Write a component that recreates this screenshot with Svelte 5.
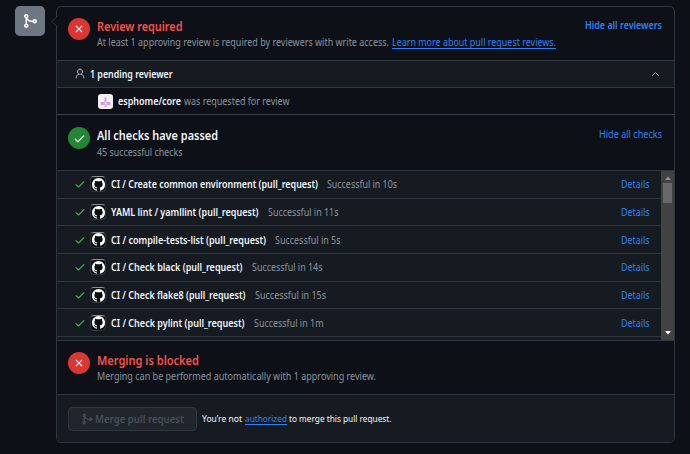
<script>
  const checks = [
    { name: 'CI / Create common environment (pull_request)', time: '10s', w: 207, tw: 70 },
    { name: 'YAML lint / yamllint (pull_request)', time: '11s', w: 147.5, tw: 70.5 },
    { name: 'CI / compile-tests-list (pull_request)', time: '5s', w: 155, tw: 65.5 },
    { name: 'CI / Check black (pull_request)', time: '14s', w: 131.5, tw: 70.5 },
    { name: 'CI / Check flake8 (pull_request)', time: '15s', w: 134.5, tw: 71 },
    { name: 'CI / Check pylint (pull_request)', time: '1m', w: 133.5, tw: 69.5 }
  ];

  // Condenses a label so that its text spans the given width.
  function fit(node, width) {
    const natural = node.getBoundingClientRect().width;
    node.style.transformOrigin = '0 50%';
    node.style.transform = `scaleX(${width / natural})`;
    node.style.marginRight = `${width - natural}px`;
  }
</script>

{#snippet merge(size)}
  <svg width={size} height={size} viewBox="0 0 16 16" fill="currentColor"><path d="M5.45 5.154A4.25 4.25 0 0 0 9.25 7.5h1.378a2.251 2.251 0 1 1 0 1.5H9.25A5.734 5.734 0 0 1 5 7.123v3.505a2.25 2.25 0 1 1-1.5 0V5.372a2.25 2.25 0 1 1 1.95-.218ZM4.25 13.5a.75.75 0 1 0 0-1.5.75.75 0 0 0 0 1.5Zm8.5-4.5a.75.75 0 1 0 0-1.5.75.75 0 0 0 0 1.5ZM5 3.25a.75.75 0 1 0-1.5 0 .75.75 0 0 0 1.5 0Z" /></svg>
{/snippet}
{#snippet cross()}
  <span class="status red"><svg width="12" height="12" viewBox="0 0 16 16" fill="currentColor"><path d="M3.72 3.72a.75.75 0 0 1 1.06 0L8 6.94l3.22-3.22a.749.749 0 0 1 1.275.326.749.749 0 0 1-.215.734L9.06 8l3.22 3.22a.749.749 0 0 1-.326 1.275.749.749 0 0 1-.734-.215L8 9.06l-3.22 3.22a.751.751 0 0 1-1.042-.018.751.751 0 0 1-.018-1.042L6.94 8 3.72 4.78a.75.75 0 0 1 0-1.06Z" /></svg></span>
{/snippet}
{#snippet tick(size)}
  <svg width={size} height={size} viewBox="0 0 16 16" fill="currentColor"><path d="M13.78 4.22a.75.75 0 0 1 0 1.06l-7.25 7.25a.75.75 0 0 1-1.06 0L2.22 9.28a.751.751 0 0 1 .018-1.042.751.751 0 0 1 1.042-.018L6 10.94l6.72-6.72a.75.75 0 0 1 1.06 0Z" /></svg>
{/snippet}

<main>
  <div class="badge">{@render merge(16)}</div>
  <div class="box">
    <svg class="pointer" width="7" height="13" viewBox="0 0 7 13"><path d="M7 .5 1 6.5l6 6" fill="#0d1117" stroke="#30363d" /></svg>

    <section class="head review">
      {@render cross()}
      <div class="copy">
        <h3 class="danger"><span use:fit={85.5}>Review required</span></h3>
        <p><span use:fit={292}>At least 1 approving review is required by reviewers with write access.</span><a class="under" href="#reviews" use:fit={164}>Learn more about pull request reviews.</a></p>
      </div>
      <a class="toggle strong" href="#reviewers" use:fit={77}>Hide all reviewers</a>
    </section>

    <div class="pending">
      <svg width="12" height="12" viewBox="0 0 16 16" fill="#8b949e"><path d="M10.561 8.073a6.005 6.005 0 0 1 3.432 5.142.75.75 0 1 1-1.498.07 4.5 4.5 0 0 0-8.99 0 .75.75 0 0 1-1.498-.07 6.004 6.004 0 0 1 3.431-5.142 3.999 3.999 0 1 1 5.123 0ZM10.5 5a2.5 2.5 0 1 0-5 0 2.5 2.5 0 0 0 5 0Z" /></svg>
      <b use:fit={82.5}>1 pending reviewer</b>
      <svg class="chev" width="9" height="6" viewBox="0 0 9 6" fill="none" stroke="#8b949e"><path d="M1 5 4.5 1.5 8 5" /></svg>
    </div>

    <div class="reviewer">
      <svg width="15" height="15" viewBox="0 0 15 15"><rect width="15" height="15" rx="3" fill="#f0f0f0" /><path d="M6.500 3.500h2V8h4v3h-4v2h-2v-2h-4V8h4z" fill="#d3a0e2" /><path d="M6.500 8.500h2v2h-2z" fill="#f0e4f4" /></svg>
      <b use:fit={63}>esphome/core</b><span class="asked" use:fit={105.5}>was requested for review</span>
    </div>

    <section class="head passed">
      <span class="status green">{@render tick(13)}</span>
      <div class="copy">
        <h3><span use:fit={121}>All checks have passed</span></h3>
        <p><span use:fit={85.5}>45 successful checks</span></p>
      </div>
      <a class="toggle" href="#checks" use:fit={63}>Hide all checks</a>
    </section>

    <div class="list">
      <div class="rows">
        {#each checks as c}
          <div class="row">
            <span class="ok">{@render tick(12)}</span>
            <span class="avatar"><svg width="13" height="13" viewBox="0 0 16 16" fill="#fff"><path d="M8 0c4.420 0 8 3.580 8 8a8.013 8.013 0 0 1-5.450 7.590c-.4.080-.55-.170-.55-.380 0-.270.010-1.130.010-2.200 0-.750-.250-1.230-.540-1.480 1.780-.2 3.650-.880 3.650-3.950 0-.880-.310-1.590-.820-2.150.080-.2.360-1.020-.080-2.120 0 0-.670-.220-2.200.820-.640-.180-1.320-.270-2-.270s-1.360.090-2 .270c-1.530-1.030-2.200-.820-2.200-.820-.440 1.100-.160 1.920-.080 2.120-.510.560-.820 1.280-.820 2.150 0 3.060 1.860 3.750 3.640 3.950-.230.2-.440.550-.510 1.070-.460.210-1.610.550-2.330-.660-.150-.240-.6-.830-1.230-.820-.670.010-.270.380.010.530.340.190.730.9.820 1.130.160.450.680 1.310 2.690.940 0 .670.010 1.300.010 1.490 0 .210-.150.450-.550.380A7.995 7.995 0 0 1 0 8c0-4.420 3.580-8 8-8Z" /></svg></span>
            <b use:fit={c.w}>{c.name}</b>
            <span class="time" use:fit={c.tw}>Successful in {c.time}</span>
            <a class="details" href="#details" use:fit={28.5}>Details</a>
          </div>
        {/each}
      </div>
      <div class="scroll">
        <svg width="6" height="4" viewBox="0 0 6 4" fill="#909090"><path d="M0 4 3 0.500 6 4z" /></svg>
        <i></i>
        <svg class="down" width="6" height="4" viewBox="0 0 6 4" fill="#fff"><path d="M0 0h6L3 3.500z" /></svg>
      </div>
    </div>

    <section class="head blocked">
      {@render cross()}
      <div class="copy">
        <h3 class="danger"><span use:fit={102}>Merging is blocked</span></h3>
        <p><span use:fit={279}>Merging can be performed automatically with 1 approving review.</span></p>
      </div>
    </section>

    <footer>
      <button disabled>{@render merge(12)}<span use:fit={89}>Merge pull request</span></button>
      <p><span use:fit={40}>You’re not</span><a class="under" href="#authorized" use:fit={42}>authorized</a><span use:fit={102.5}>to merge this pull request.</span></p>
    </footer>
  </div>
</main>

<style>
  :global(body) { background: #0d1117; }
  * { box-sizing: border-box; }
  main { display: flex; align-items: flex-start; width: 690px; height: 454px; padding: 6px 0 0 15px; overflow: hidden; background: #0d1117; color: #f0f6fc; font: 10px/14px "Noto Sans", sans-serif; white-space: nowrap; }
  svg { display: block; flex: none; }
  a { color: #2f81f7; text-decoration: none; }
  h3, p { margin: 0; }
  h3 { display: flex; font-size: 12.500px; line-height: 18px; font-weight: 600; }
  .danger { color: #f85149; }
  p { display: flex; align-items: flex-start; gap: 3px; }
  b { font-weight: 600; flex: none; }
  .badge { display: grid; place-items: center; width: 30px; height: 30px; margin-right: 11px; border-radius: 5px; background: #6e7681; color: #fff; }
  .box { position: relative; width: 619px; height: 437px; border: 1px solid #30363d; border-radius: 5px; }
  .pointer { position: absolute; left: -6px; top: 8px; }
  .head { display: flex; padding: 0 12px 0 11px; align-items: flex-start; }
  .review { height: 54px; padding-top: 11px; border-bottom: 1px solid #30363d; }
  .passed { height: 55px; padding-top: 12px; }
  .passed .copy p { margin-top: 0; }
  .blocked { height: 53px; padding-top: 11px; }
  .status { display: grid; place-items: center; width: 22px; height: 22px; border-radius: 50%; color: #fff; flex: none; }
  .red { background: #da3633; }
  .green { background: #238636; }
  .copy { margin-left: 7px; flex: 1; min-width: 0; }
  .copy p { color: #8b949e; line-height: 14px; margin-top: -1px; }
  .under { text-decoration: underline; text-underline-offset: 2px; text-decoration-thickness: 1px; }
  .toggle { line-height: 14px; flex: none; }
  .strong { font-weight: 600; }
  .pending { display: flex; align-items: center; height: 27px; padding: 0 14px 0 17px; background: #161b22; border-bottom: 1px solid #30363d; }
  .pending b { margin-left: 4px; }
  .chev { margin-left: auto; }
  .reviewer { display: flex; align-items: center; height: 27px; padding-left: 41px; border-bottom: 1px solid #3b4149; }
  .reviewer b { margin-left: 5px; }
  .asked { margin-left: 2.500px; color: #8b949e; }
  .list { display: flex; height: 171px; border: solid #30363d; border-width: 1px 0; background: #161b22; }
  .rows { flex: 1; }
  .row { display: flex; align-items: center; height: 27.700px; padding: 0 12px 0 17px; border-bottom: 1px solid #30363d; }
  .ok { color: #3fb950; }
  .avatar { display: grid; place-items: center; width: 16px; height: 16px; margin: 0 5px 0 4px; border-radius: 4px; background: #0b0e13; border: 1px solid #30363d; border-top-color: #8b9096; }
  .time { margin-left: 9px; color: #8b949e; }
  .details { margin-left: auto; }
  .scroll { display: flex; flex-direction: column; align-items: center; width: 13px; padding: 5px 0; background: #424242; }
  .scroll i { width: 9px; height: 20px; margin-top: 3px; background: #686868; }
  .down { margin-top: auto; }
  footer { display: flex; align-items: center; height: 48px; padding-left: 11px; background: #161b22; border-top: 1px solid #30363d; border-radius: 0 0 4px 4px; }
  button { display: flex; align-items: center; justify-content: center; gap: 2px; width: 129px; height: 24px; padding: 0; border: 1px solid #30363d; border-radius: 4px; background: #21262d; color: #484f58; font: 600 11.500px/16px "Noto Sans", sans-serif; }
  footer p { margin-left: 5px; gap: 2.500px; font-size: 9.500px; }
</style>
